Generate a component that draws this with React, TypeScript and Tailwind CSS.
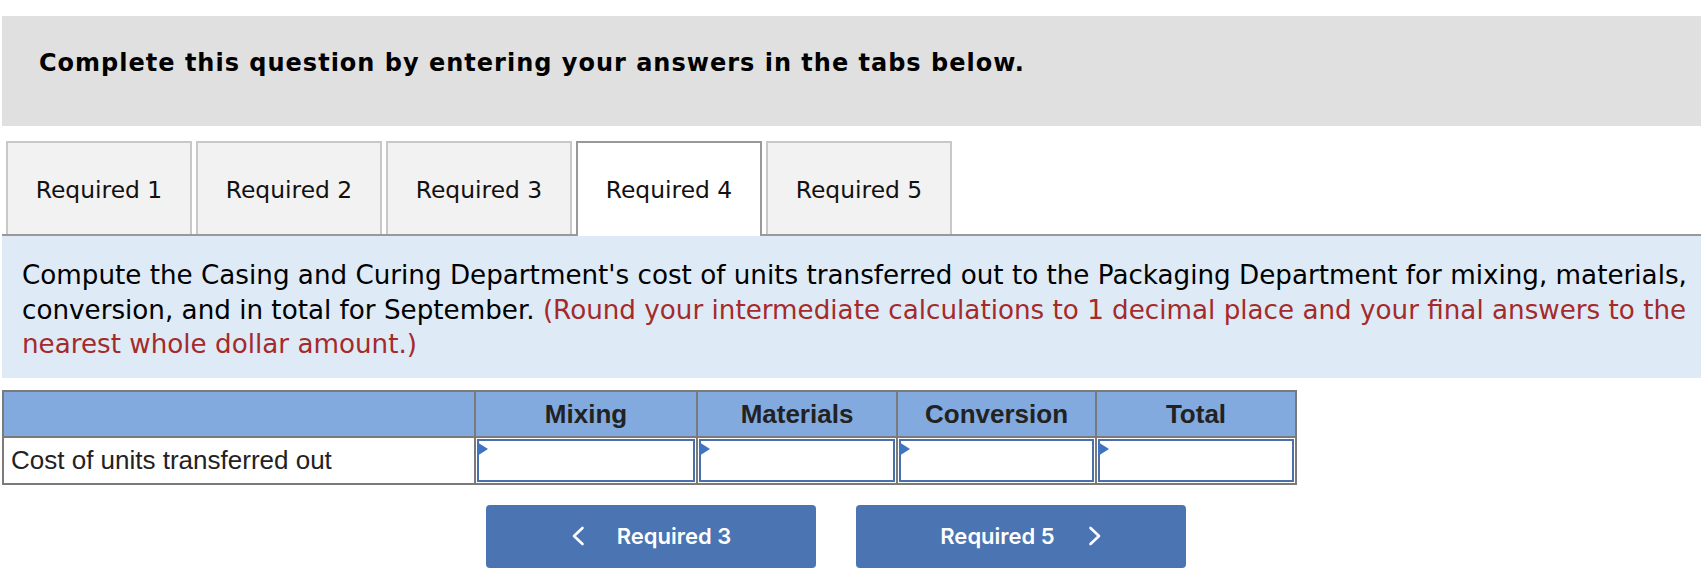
import { useState } from "react";

const tabs = ["Required 1", "Required 2", "Required 3", "Required 4", "Required 5"];
const columns = ["Mixing", "Materials", "Conversion", "Total"];

function Chevron({ dir }: { dir: "left" | "right" }) {
  return (
    <svg width="14" height="20" viewBox="0 0 14 20" fill="none" aria-hidden="true">
      <path
        d={dir === "left" ? "M11.5 2 L3 10 L11.5 18" : "M2.5 2 L11 10 L2.5 18"}
        stroke="white"
        strokeWidth="2.6"
        strokeLinecap="round"
        strokeLinejoin="round"
      />
    </svg>
  );
}

function AnswerCell() {
  return (
    <td className="h-[47px] border-2 border-[#7a7a7a] bg-white p-[1px]">
      <div className="relative h-full border-2 border-[#4b6fa8]">
        <span className="absolute left-[-2px] top-[1px] h-0 w-0 border-y-[7px] border-l-[11px] border-y-transparent border-l-[#3f74c0]" />
      </div>
    </td>
  );
}

export default function App() {
  const [active, setActive] = useState(3);

  return (
    <div className="min-h-[579px] bg-white pl-[2px] pt-[16px] font-['DejaVu_Sans',Verdana,sans-serif] text-black">
      <div className="h-[110px] bg-[#e0e0e0] pl-[37px] pt-[33px] text-[24px] font-bold leading-[28px] tracking-[1px]">
        Complete this question by entering your answers in the tabs below.
      </div>

      <div className="mt-[15px] flex items-end gap-[4px] border-b-2 border-[#999999] pl-[4px]">
        {tabs.map((tab, i) =>
          i === active ? (
            <button
              key={tab}
              onClick={() => setActive(i)}
              className="relative z-10 -mb-[2px] h-[95px] w-[186px] border-2 border-b-0 border-[#999999] bg-white pb-[2px] pt-[4px] text-[23.4px] text-[#111]"
            >
              {tab}
            </button>
          ) : (
            <button
              key={tab}
              onClick={() => setActive(i)}
              className="h-[93px] w-[186px] border-2 border-b-0 border-[#c8c8c8] bg-[#f2f2f2] pt-[4px] text-[23.4px] text-[#111]"
            >
              {tab}
            </button>
          )
        )}
      </div>

      <div className="whitespace-nowrap bg-[#deeaf6] pb-[16px] pl-[20px] pr-[4px] pt-[22px] text-[26.2px] leading-[34.5px]">
        Compute the Casing and Curing Department's cost of units transferred out to the Packaging Department for mixing, materials,
        <br />
        conversion, and in total for September.{" "}
        <span className="text-[#a52a2a]">
          (Round your intermediate calculations to 1 decimal place and your final answers to the
          <br />
          nearest whole dollar amount.)
        </span>
      </div>

      <table className="mt-[12px] table-fixed border-collapse font-['Liberation_Sans',Arial,sans-serif] text-[26px] text-[#222]">
        <colgroup>
          <col className="w-[472px]" />
          <col className="w-[222px]" />
          <col className="w-[200px]" />
          <col className="w-[199px]" />
          <col className="w-[200px]" />
        </colgroup>
        <thead>
          <tr className="h-[46px] bg-[#82aade]">
            <th className="border-2 border-[#7a7a7a]" />
            {columns.map((c) => (
              <th key={c} className="border-2 border-[#7a7a7a] text-center font-bold leading-none">
                {c}
              </th>
            ))}
          </tr>
        </thead>
        <tbody>
          <tr>
            <td className="h-[47px] border-2 border-[#7a7a7a] pl-[7px] leading-none">Cost of units transferred out</td>
            {columns.map((c) => (
              <AnswerCell key={c} />
            ))}
          </tr>
        </tbody>
      </table>

      <div className="mt-[20px] flex gap-[40px] pl-[484px] font-['Inter',sans-serif] text-[22px] font-semibold text-white">
        <button className="flex h-[63px] w-[330px] items-center justify-center gap-[32px] rounded-[4px] bg-[#4a74b2]">
          <Chevron dir="left" />
          <span>Required 3</span>
        </button>
        <button className="flex h-[63px] w-[330px] items-center justify-center gap-[33px] rounded-[4px] bg-[#4a74b2]">
          <span>Required 5</span>
          <Chevron dir="right" />
        </button>
      </div>
    </div>
  );
}
